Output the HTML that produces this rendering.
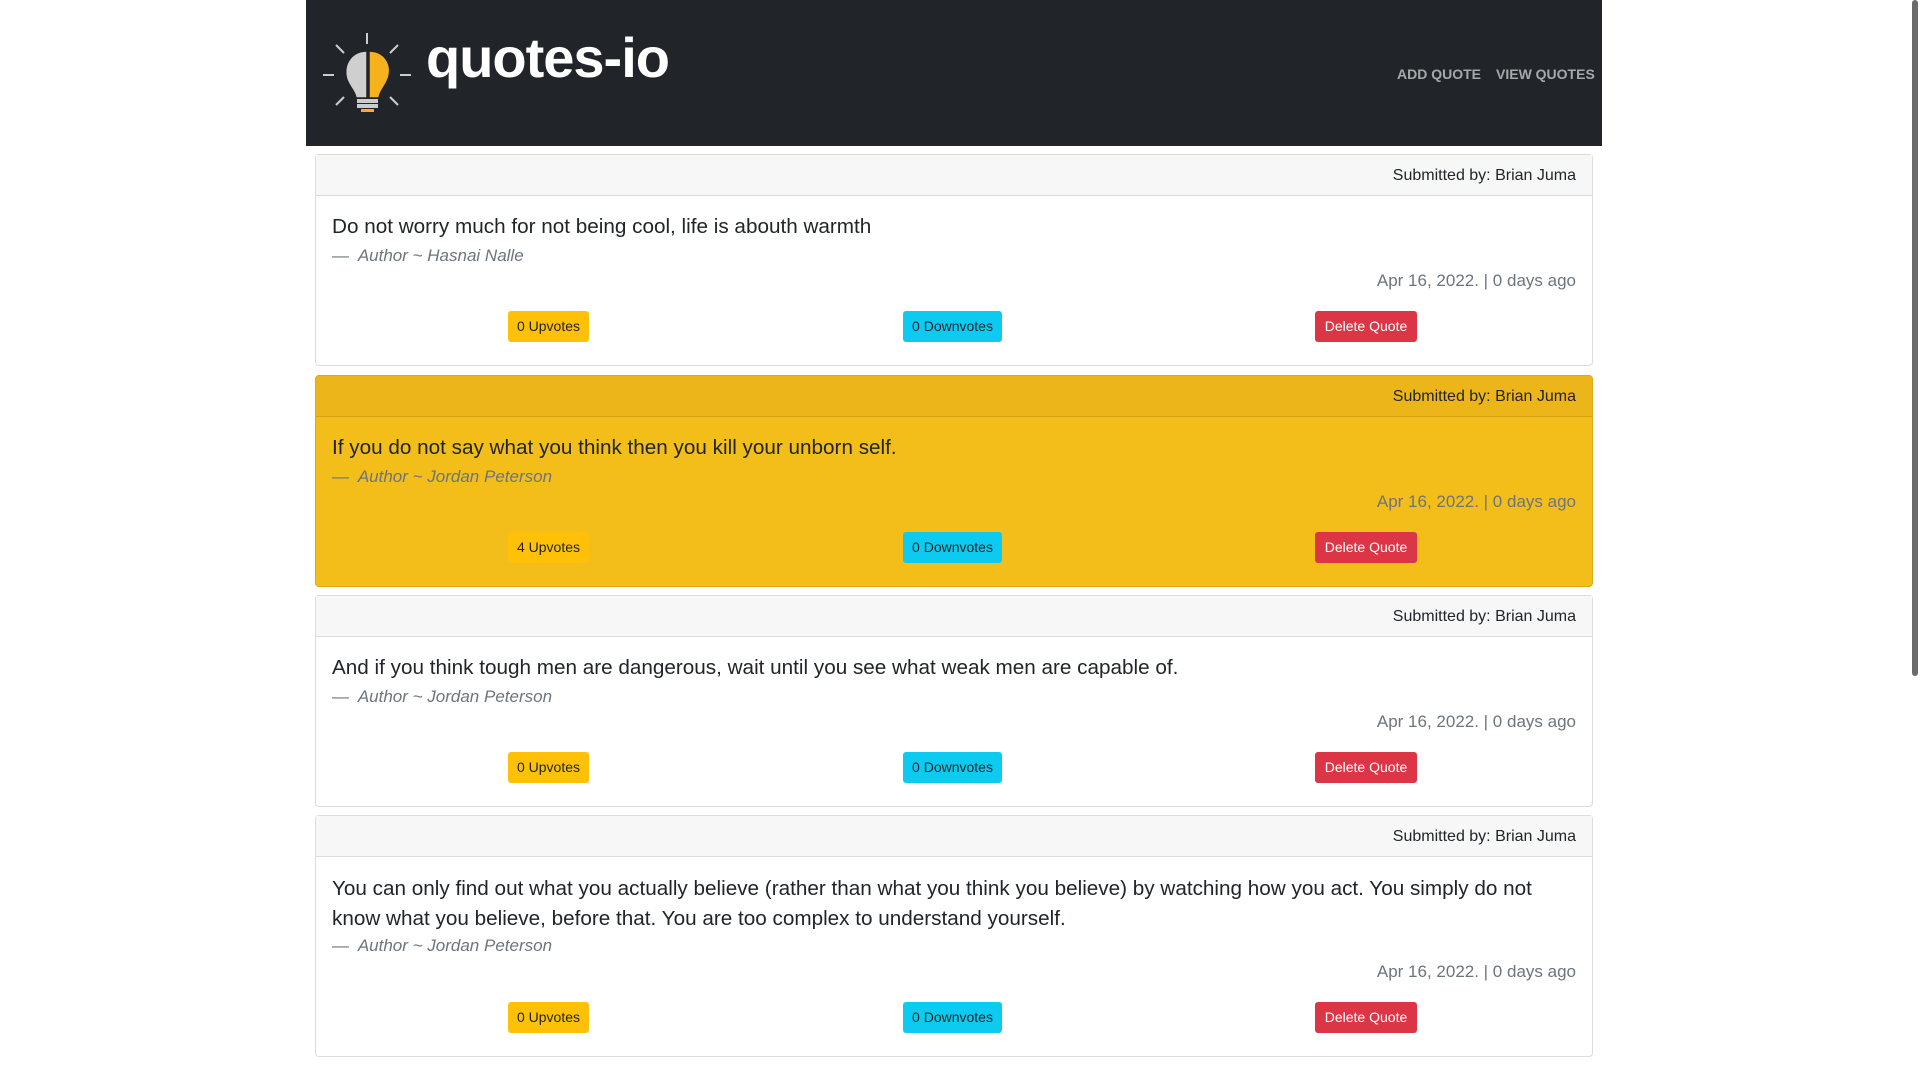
<!DOCTYPE html>
<html><head><meta charset="utf-8"><style>
*{margin:0;padding:0;box-sizing:border-box}
body{width:1920px;height:1080px;background:#fff;font-family:"Liberation Sans",sans-serif;color:#212529;position:relative;overflow:hidden}
.hdr{position:absolute;left:306px;top:0;width:1296px;height:146px;background:#212529}
.title{position:absolute;left:426px;top:25px;font-size:56px;font-weight:bold;color:#fff;letter-spacing:-1px}
.nav{position:absolute;top:66px;font-size:14px;font-weight:bold;color:rgba(255,255,255,.6)}
.card{position:absolute;left:315px;width:1278px;border:1px solid #dcdcdc;border-radius:4px;background:#fff}
.card .h{position:absolute;left:0;top:0;right:0;height:41px;background:#f7f7f7;border-bottom:1px solid #dcdcdc}
.card.w{background:#f3bd1a;border-color:#dcaa14}
.card.w .h{background:#ecb61a;border-color:#d5a414}
.sub{position:absolute;right:16px;top:12px;font-size:16px}
.q{position:absolute;left:16px;font-size:20.7px;line-height:30px;width:1250px}
.a{position:absolute;left:16px;font-size:17px;font-style:italic;color:#6c757d}
.d{position:absolute;right:16px;font-size:17px;color:#6c757d}
.b{position:absolute;height:31px;line-height:31px;font-size:14px;text-align:center;border-radius:3px}
.up{left:192px;width:81px;background:#ffc107;color:#212529}
.dn{left:587px;width:99px;background:#0dcaf0;color:#212529}
.del{left:999px;width:102px;background:#dc3545;color:#fff}
</style></head><body>
<div class="hdr">
<svg style="position:absolute;left:16px;top:30px" width="90" height="85" viewBox="0 0 90 85">
<g stroke="#ccc" stroke-width="2"><line x1="45" y1="3" x2="45" y2="14"/><line x1="14" y1="15" x2="22" y2="23"/><line x1="76" y1="15" x2="68" y2="23"/><line x1="1" y1="45" x2="12" y2="45"/><line x1="78" y1="45" x2="89" y2="45"/><line x1="14" y1="75" x2="22" y2="67"/><line x1="76" y1="75" x2="68" y2="67"/></g>
<path d="M45 21 C30 21 22 33 24 46 C25 55 33 60 34 68 L45 68 Z" fill="#cfcfcf" stroke="#222" stroke-width="1.5"/>
<path d="M47 21 C62 21 70 33 67 46 C65 55 58 60 57 68 L47 68 Z" fill="#f5b21d" stroke="#222" stroke-width="1.5"/>
<rect x="35" y="69" width="21" height="4" fill="#ccc"/><rect x="35" y="74" width="21" height="4" fill="#ccc"/><rect x="39" y="79" width="13" height="3" fill="#f5b21d"/>
</svg>
</div>
<div class="title">quotes-io</div>
<div class="nav" style="left:1397px">ADD QUOTE</div>
<div class="nav" style="left:1496px">VIEW QUOTES</div>

<div class="card" style="top:154px;height:212px"><div class="h"></div><div class="sub">Submitted by: Brian Juma</div>
<div class="q" style="top:57px">Do not worry much for not being cool, life is abouth warmth</div>
<div class="a" style="top:91px">—&nbsp; Author ~ Hasnai Nalle</div>
<div class="d" style="top:116px">Apr 16, 2022. | 0 days ago</div>
<div class="b up" style="top:156px">0 Upvotes</div><div class="b dn" style="top:156px">0 Downvotes</div><div class="b del" style="top:156px">Delete Quote</div></div>

<div class="card w" style="top:375px;height:212px"><div class="h"></div><div class="sub">Submitted by: Brian Juma</div>
<div class="q" style="top:57px">If you do not say what you think then you kill your unborn self.</div>
<div class="a" style="top:91px">—&nbsp; Author ~ Jordan Peterson</div>
<div class="d" style="top:116px">Apr 16, 2022. | 0 days ago</div>
<div class="b up" style="top:156px">4 Upvotes</div><div class="b dn" style="top:156px">0 Downvotes</div><div class="b del" style="top:156px">Delete Quote</div></div>

<div class="card" style="top:595px;height:212px"><div class="h"></div><div class="sub">Submitted by: Brian Juma</div>
<div class="q" style="top:57px">And if you think tough men are dangerous, wait until you see what weak men are capable of.</div>
<div class="a" style="top:91px">—&nbsp; Author ~ Jordan Peterson</div>
<div class="d" style="top:116px">Apr 16, 2022. | 0 days ago</div>
<div class="b up" style="top:156px">0 Upvotes</div><div class="b dn" style="top:156px">0 Downvotes</div><div class="b del" style="top:156px">Delete Quote</div></div>

<div class="card" style="top:815px;height:242px"><div class="h"></div><div class="sub">Submitted by: Brian Juma</div>
<div class="q" style="top:58px">You can only find out what you actually believe (rather than what you think you believe) by watching how you act. You simply do not know what you believe, before that. You are too complex to understand yourself.</div>
<div class="a" style="top:120px">—&nbsp; Author ~ Jordan Peterson</div>
<div class="d" style="top:146px">Apr 16, 2022. | 0 days ago</div>
<div class="b up" style="top:186px">0 Upvotes</div><div class="b dn" style="top:186px">0 Downvotes</div><div class="b del" style="top:186px">Delete Quote</div></div>

<div style="position:absolute;left:1912px;top:0;width:6px;height:676px;background:#6b6b6b;border-radius:3px"></div>
</body></html>
